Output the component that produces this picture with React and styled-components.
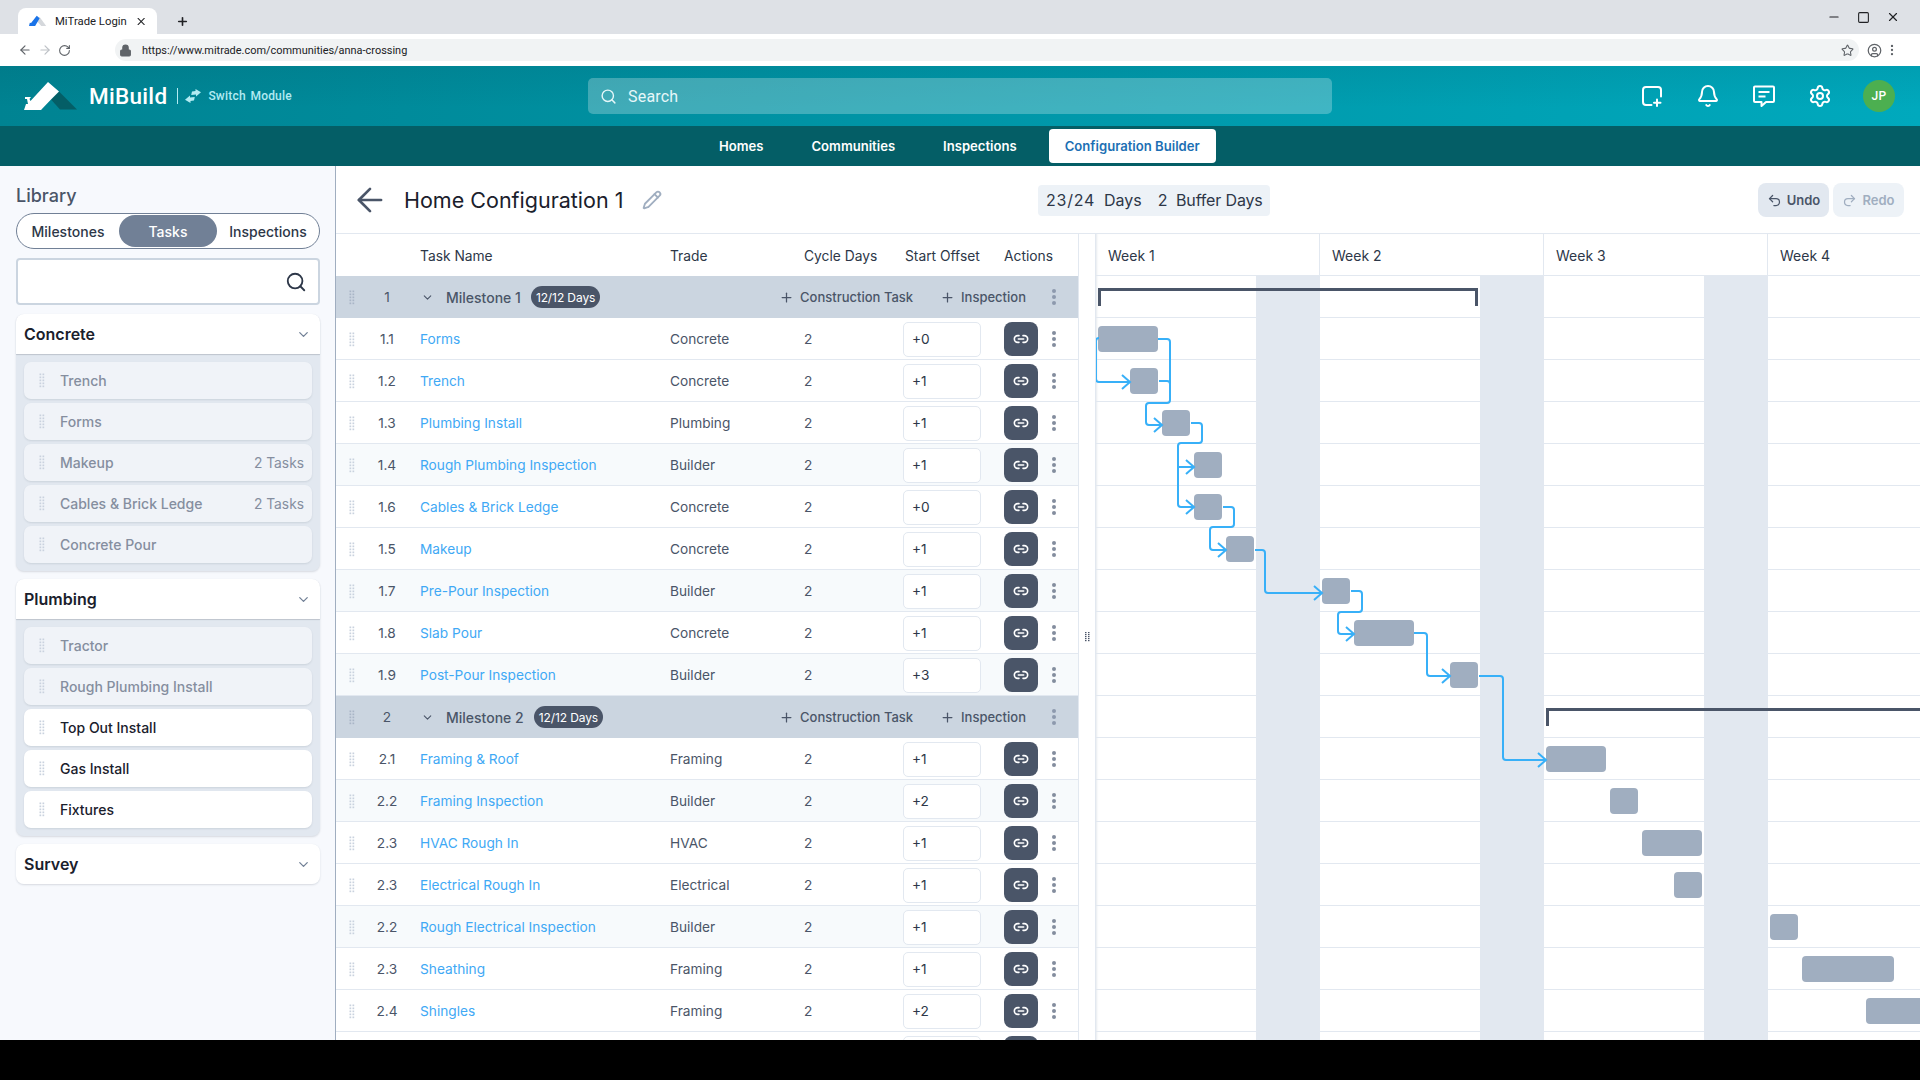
import React from 'react';
import styled, { createGlobalStyle } from 'styled-components';
import {
  ArrowLeft, ArrowRight, RotateCw, Lock, Star, CircleUser, EllipsisVertical, Minus, Square, X, Plus,
  Search, Bell, Settings, Pencil, ChevronDown, Link2, Undo2, Redo2,
} from 'lucide-react';

const GlobalStyle = createGlobalStyle`
  html, body { margin: 0; padding: 0; background: #000; }
  body { font-family: Inter, "Liberation Sans", sans-serif; overflow: hidden; }
  * { box-sizing: border-box; }
`;

const Page = styled.div`
  width: 1920px; height: 1080px; display: flex; flex-direction: column; overflow: hidden; background: #fff;
`;

/* browser chrome */
const TabStrip = styled.div`
  height: 34px; background: #dee1e6; display: flex; align-items: flex-end; padding-left: 18px; flex: none;
  font-family: Roboto, sans-serif; color: #202124;
`;
const Tab = styled.div`
  width: 139px; height: 26px; background: #fff; border-radius: 8px 8px 0 0; display: flex; align-items: center;
  padding: 0 10px 0 11px; font-size: 11.300px; gap: 8px;
`;
const TabTitle = styled.span`flex: 1; white-space: nowrap;`;
const NewTab = styled.div`width: 50px; height: 26px; display: flex; align-items: center; justify-content: center;`;
const WindowControls = styled.div`
  margin-left: auto; height: 34px; display: flex; align-items: center; gap: 16px; padding: 0 20px 0 0;
`;
const Toolbar = styled.div`
  height: 32px; background: #fff; display: flex; align-items: center; flex: none; padding: 0 20px 0 18px;
  font-family: Roboto, sans-serif;
`;
const NavIcons = styled.div`display: flex; align-items: center; gap: 6px; width: 97px; color: #5f6368;`;
const Address = styled.div`
  width: 1744px; height: 22px; border-radius: 11px; background: #f1f3f4; display: flex; align-items: center;
  padding: 0 5px 0 4px; font-size: 10.950px; color: #202124; gap: 10px;
`;
const AddressUrl = styled.span`flex: 1; white-space: nowrap;`;
const ProfileIcons = styled.div`display: flex; align-items: center; gap: 3px; margin-left: 8px; color: #5f6368;`;

/* app header */
const Header = styled.header`
  height: 60px; flex: none; display: grid; grid-template-columns: 588px 744px 1fr; align-items: center; color: #fff;
  background: linear-gradient(180deg, rgba(0,40,50,.08), rgba(0,40,50,0) 70%), linear-gradient(90deg, #008392, #00a9bd);
  font-family: Roboto, sans-serif;
`;
const Brand = styled.div`display: flex; align-items: center; padding-left: 24px;`;
const BrandName = styled.span`font-size: 22.500px; font-weight: 500; margin-left: 9px; letter-spacing: .3px;`;
const BrandRule = styled.span`width: 1px; height: 16px; background: #b2ebf2; margin: 0 7px 0 10px;`;
const SwitchLabel = styled.span`
  font-size: 12px; font-weight: 500; color: #b2ebf2; margin-left: 7px; word-spacing: 1.500px; letter-spacing: .2px;
`;
const HeaderSearch = styled.div`
  height: 36px; border-radius: 5px; background: rgba(255,255,255,.25); display: flex; align-items: center;
  padding-left: 12px; gap: 11px; font-size: 16px; color: #e6f7f9; letter-spacing: .2px;
`;
const HeaderActions = styled.div`
  display: flex; align-items: center; justify-content: flex-end; gap: 32px; padding-right: 25px;
`;
const Avatar = styled.div`
  width: 32px; height: 32px; border-radius: 50%; background: #4caf50; display: flex; align-items: center;
  justify-content: center; font-size: 12px; font-weight: 500; letter-spacing: .3px; margin-left: -1px;
`;
const NavBar = styled.nav`
  height: 40px; flex: none; background: #045e66; display: flex; align-items: center; gap: 16px; padding-left: 703px;
`;
const NavLink = styled.a`
  height: 34px; display: flex; align-items: center; padding: 0 16px; border-radius: 4px;
  font-size: 13.100px; font-weight: 600;
  color: ${p => (p.$active ? '#1c6fb4' : '#fff')}; background: ${p => (p.$active ? '#fff' : 'transparent')};
`;

/* body */
const Body = styled.div`flex: 1; min-height: 0; display: flex;`;
const Sidebar = styled.aside`
  width: 336px; flex: none; background: #f7f9fd; border-right: 1px solid #a0aec0; padding: 19px 15px 0 16px; overflow: hidden;
`;
const SideTitle = styled.h2`margin: 0; font-size: 18px; line-height: 22px; font-weight: 500; color: #4a5568;`;
const LibTabs = styled.div`
  margin-top: 6px; height: 36px; border: 1px solid #718096; border-radius: 18px; background: #fff; padding: 1px 0;
  display: grid; grid-template-columns: 102px 98px 102px;
`;
const LibTab = styled.div`
  border-radius: 17px; display: flex; align-items: center; justify-content: center; font-size: 14px; font-weight: 500;
  color: ${p => (p.$active ? '#fff' : '#2d3748')}; background: ${p => (p.$active ? '#718096' : 'transparent')};
`;
const SideSearch = styled.div`
  margin-top: 9px; height: 47px; border: 2px solid #cbd5e0; border-radius: 4px; background: #fff;
  display: flex; align-items: center; justify-content: flex-end; padding-right: 11px; color: #2d3748;
`;
const Group = styled.section`
  margin-top: ${p => (p.$first ? 9 : 8)}px; border-radius: 8px; box-shadow: 0 1px 2px rgba(45,55,72,.16); background: #e2e8f0;
`;
const GroupHead = styled.div`
  height: 40px; background: #fff; display: flex; align-items: center; justify-content: space-between; padding: 0 9px 0 8px;
  border-radius: ${p => (p.$closed ? '8px' : '8px 8px 0 0')}; font-size: 16px; font-weight: 600; color: #1a202c;
  box-shadow: ${p => (p.$closed ? 'none' : '0 1px 1px rgba(45,55,72,.2)')};
`;
const GroupBody = styled.div`display: flex; flex-direction: column; gap: 4px; padding: 8px;`;
const Item = styled.div`
  height: 37px; border-radius: 7px; display: flex; align-items: center; padding: 0 8px 0 15px; font-size: 14px; font-weight: 500;
  box-shadow: 0 1px 2px rgba(45,55,72,.12);
  background: ${p => (p.$used ? '#f0f3f8' : '#fff')}; color: ${p => (p.$used ? '#858e9f' : '#1a202c')};
`;
const ItemName = styled.span`margin-left: 15px; flex: 1;`;
const ItemCount = styled.span`font-weight: 400; color: #858e9f; font-size: 13.800px;`;

const Workspace = styled.main`flex: 1; min-width: 0; display: flex; flex-direction: column;`;
const TitleBar = styled.div`
  height: 68px; flex: none; border-bottom: 1px solid #e2e8f0; display: grid; grid-template-columns: 702px auto 1fr;
  align-items: center; padding: 1px 16px 0 0;
`;
const TitleGroup = styled.div`display: flex; align-items: center; padding-left: 15px; color: #4a5568;`;
const Title = styled.h1`margin: 0 19px 0 15px; font-size: 21.500px; line-height: 28px; font-weight: 400; color: #1a202c;`;
const DaysChip = styled.div`
  height: 31px; padding: 0 7px 0 8px; border-radius: 4px; background: #edf2f7; display: flex; align-items: center; gap: 16px;
  font-size: 16px; color: #2d3748;
`;
const DaysCount = styled.span`letter-spacing: .75px;`;
const BufferCount = styled.span`letter-spacing: -.15px;`;
const HistoryGroup = styled.div`display: flex; justify-content: flex-end; gap: 4px;`;
const HistoryButton = styled.button`
  width: 71px; height: 34px; border: 0; border-radius: 8px; display: flex; align-items: center; justify-content: center; gap: 5px;
  font: 600 13px Inter, sans-serif; background: ${p => (p.$off ? '#edf2f7' : '#e2e8f0')}; color: ${p => (p.$off ? '#a0aec0' : '#4a5568')};
`;
const Split = styled.div`flex: 1; min-height: 0; display: flex; align-items: stretch;`;
const Table = styled.div`width: 743px; flex: none; border-right: 1px solid #e2e8f0; overflow: hidden;`;
const Row = styled.div`
  height: 42px; padding-top: 1px; display: grid; grid-template-columns: 32px 52px 250px 134px 99px 101px 1fr; align-items: center;
  border-bottom: 1px solid #e2e8f0; font-size: 13.700px; color: #4a5568; background: ${p => (p.$tint ? '#f7fafc' : '#fff')};
`;
const HeadRow = styled(Row)`color: #2d3748; font-weight: 400; border-bottom: 0; font-size: 13.800px;`;
const OffsetHead = styled.span`margin-left: 2px;`;
const MilestoneRow = styled(Row)`background: #cbd5e0; border-bottom: 0; padding-top: 0;`;
const GripCell = styled.div`display: flex; justify-content: center;`;
const IndexCell = styled.div`width: 38px; text-align: center;`;
const TaskLink = styled.a`color: #3fa9f5;`;
const OffsetField = styled.div`
  width: 78px; height: 35px; border: 1px solid #e2e8f0; border-radius: 5px; background: #fff; display: flex; align-items: center;
  padding-left: 8px; color: #2d3748;
`;
const ActionCell = styled.div`display: flex; align-items: center; gap: 0;`;
const LinkButton = styled.div`
  width: 34px; height: 34px; border-radius: 8px; background: #4a5568; color: #fff; display: flex; align-items: center; justify-content: center;
`;
const MoreCell = styled.div`width: 32px; display: flex; justify-content: center;`;
const MilestoneBody = styled.div`
  grid-column: 3 / -1; display: flex; align-items: center; font-weight: 500; color: #4a5568; padding-right: 8px; white-space: nowrap;
`;
const MilestoneChevron = styled(ChevronDown)`margin-left: 1px;`;
const MilestoneName = styled.span`margin-left: 12px; font-size: 14px;`;
const DaysPill = styled.span`
  margin-left: 10px; height: 22px; border-radius: 11px; padding: 0 5px; background: #4a5568; color: #fff; font-size: 12px; font-weight: 400;
  display: flex; align-items: center; letter-spacing: -.1px;
`;
const AddGroup = styled.div`margin-left: auto; display: flex; align-items: center; gap: 27px;`;
const AddAction = styled.span`display: flex; align-items: center; gap: 6px; font-size: 13px;`;
const MilestoneMore = styled.div`margin-left: 12px; width: 32px; display: flex; justify-content: center;`;
const Handle = styled.div`width: 16px; flex: none; display: flex; align-items: center; justify-content: center;`;

const Gantt = styled.div`
  flex: 1; min-width: 0; border-left: 1px solid #e2e8f0; overflow: hidden;
  box-shadow: inset 2px 0 2px -1px rgba(160,174,192,.25);
`;
const WeekHead = styled.div`display: flex; height: 42px; border-bottom: 1px solid #e2e8f0;`;
const Week = styled.div`
  width: 224px; flex: none; border-right: 1px solid #e2e8f0; padding: 1px 0 0 12px; display: flex; align-items: center; font-size: 14px; color: #2d3748;
`;
const Canvas = styled.div`position: relative; height: 800px;`;
const Weekend = styled.div`
  position: absolute; top: 0; bottom: 0; left: ${p => p.$left}px; width: 64px; background: #e2e8f0; z-index: 1;
`;
const GanttRow = styled.div`
  display: flow-root; height: 42px; border-bottom: 1px solid #e2e8f0; position: relative; z-index: ${p => (p.$over ? 2 : 0)};
`;
const Bar = styled.div`
  height: 26px; margin-top: 8px; border-radius: 4px; background: #a0aec0;
  margin-left: ${p => p.$left}px; width: ${p => p.$width}px;
`;
const Bracket = styled.div`
  height: 18px; margin-top: 12px; border: 3px solid #4a5568; border-bottom: 0;
  margin-left: ${p => p.$left}px; width: ${p => p.$width}px;
`;
const Connectors = styled.svg`
  position: absolute; left: 0; top: 0; width: 824px; height: 800px; z-index: 3; pointer-events: none;
`;

const Blackout = styled.div`height: 40px; flex: none; background: #000;`;

const Grip = ({ rows = 5, color = '#c9d2de' }) => (
  <svg width="6" height={rows * 3} viewBox={`0 0 6 ${rows * 3}`} fill={color}>
    {Array.from({ length: rows }).flatMap((_, i) => [
      <rect key={`a${i}`} x="0.5" y={i * 3 + .5} width="1.700" height="1.700" />,
      <rect key={`b${i}`} x="3.500" y={i * 3 + .5} width="1.700" height="1.700" />,
    ])}
  </svg>
);
const Dots = ({ color = '#838d9e' }) => (
  <svg width="6" height="18" viewBox="0 0 6 18" fill={color}>
    <circle cx="3" cy="3" r="2" /><circle cx="3" cy="9" r="2" /><circle cx="3" cy="15" r="2" />
  </svg>
);
const Favicon = () => (
  <svg width="22" height="14" viewBox="0 0 22 14">
    <path d="M9 6.500l4-4.500 8 11h-6z" fill="#d5d8dc" />
    <path d="M0 13l1-4 1.500.5L9.500.5l3.500 3-5.500 9.500H0z" fill="#1a73e8" />
  </svg>
);
const Logo = () => (
  <svg width="56" height="29" viewBox="0 0 56 29">
    <path d="M27 17.500L35 9.500l18 18H36z" fill="#045e66" />
    <path d="M0 28L2 22H4L3 17H1V15H7L5.500 17 6.500 19 24 0 35 9.500 27 17.500 17 28z" fill="#fff" />
  </svg>
);
const SwitchIcon = () => (
  <svg width="16" height="14" viewBox="0 0 16 14" fill="#b2ebf2">
    <path d="M7 2.500l3.500-.5V0L16 3.200 11 7.600V5.400L6.200 6z" />
    <path d="M9 11.500l-3.500.5v2L0 10.800 5 6.400v2.200L9.800 8z" />
  </svg>
);
const AddSquare = () => (
  <svg width="24" height="24" viewBox="0 0 24 24" fill="none" stroke="#fff" strokeWidth="2" strokeLinecap="round">
    <path d="M11.500 21H6a3 3 0 0 1-3-3V6a3 3 0 0 1 3-3h12a3 3 0 0 1 3 3v6.500" />
    <path d="M17 15.500v6.500M14 18.700h6.500" />
  </svg>
);
const ChatIcon = () => (
  <svg width="24" height="24" viewBox="0 0 24 24" fill="none" stroke="#fff" strokeWidth="2" strokeLinejoin="round">
    <path d="M2 3.500a1 1 0 0 1 1-1h18a1 1 0 0 1 1 1v13.500a1 1 0 0 1-1 1h-7l-4.500 4v-4H3a1 1 0 0 1-1-1z" />
    <path d="M6.500 8h11M6.500 12.500h7" />
  </svg>
);

const route = (pts, r = 3) => {
  let d = `M${pts[0][0]} ${pts[0][1]}`;
  for (let i = 1; i < pts.length - 1; i++) {
    const [x, y] = pts[i], [px, py] = pts[i - 1], [nx, ny] = pts[i + 1];
    const inx = Math.sign(x - px), iny = Math.sign(y - py), ox = Math.sign(nx - x), oy = Math.sign(ny - y);
    d += `L${x - inx * r} ${y - iny * r}Q${x} ${y} ${x + ox * r} ${y + oy * r}`;
  }
  const [ex, ey] = pts[pts.length - 1];
  return `${d}L${ex} ${ey}`;
};
const head = (x, y) => `M${x - 8} ${y - 7}L${x} ${y}L${x - 8} ${y + 7}`;
const links = [
  route([[1098, 338], [1096, 338], [1096, 382], [1130, 382]]), head(1130, 382),
  route([[1158, 339], [1170, 339], [1170, 403], [1146, 403], [1146, 425], [1162, 425]]), head(1162, 425),
  route([[1159, 381], [1170, 381], [1170, 395]]),
  route([[1191, 423], [1202, 423], [1202, 443], [1178, 443], [1178, 507], [1194, 507]]), head(1194, 507),
  `M1178 467H1194`, head(1194, 467),
  route([[1223, 507], [1234, 507], [1234, 527], [1210, 527], [1210, 550], [1226, 550]]), head(1226, 550),
  route([[1255, 550], [1265, 550], [1265, 593], [1322, 593]]), head(1322, 593),
  route([[1351, 591], [1362, 591], [1362, 612], [1338, 612], [1338, 634], [1354, 634]]), head(1354, 634),
  route([[1414, 633], [1427, 633], [1427, 676], [1450, 676]]), head(1450, 676),
  route([[1479, 676], [1503, 676], [1503, 760], [1546, 760]]), head(1546, 760),
];

const rows = [
  { type: 'm', idx: '1', name: 'Milestone 1', bracket: [2, 380] },
  { idx: '1.1', name: 'Forms', trade: 'Concrete', off: '+0', bar: [2, 60] },
  { idx: '1.2', name: 'Trench', trade: 'Concrete', off: '+1', bar: [34, 28] },
  { idx: '1.3', name: 'Plumbing Install', trade: 'Plumbing', off: '+1', bar: [66, 28] },
  { idx: '1.4', name: 'Rough Plumbing Inspection', trade: 'Builder', off: '+1', bar: [98, 28] },
  { idx: '1.6', name: 'Cables & Brick Ledge', trade: 'Concrete', off: '+0', bar: [98, 28] },
  { idx: '1.5', name: 'Makeup', trade: 'Concrete', off: '+1', bar: [130, 28] },
  { idx: '1.7', name: 'Pre-Pour Inspection', trade: 'Builder', off: '+1', bar: [226, 28] },
  { idx: '1.8', name: 'Slab Pour', trade: 'Concrete', off: '+1', bar: [258, 60] },
  { idx: '1.9', name: 'Post-Pour Inspection', trade: 'Builder', off: '+3', bar: [354, 28] },
  { type: 'm', idx: '2', name: 'Milestone 2', bracket: [450, 900] },
  { idx: '2.1', name: 'Framing & Roof', trade: 'Framing', off: '+1', bar: [450, 60] },
  { idx: '2.2', name: 'Framing Inspection', trade: 'Builder', off: '+2', bar: [514, 28] },
  { idx: '2.3', name: 'HVAC Rough In', trade: 'HVAC', off: '+1', bar: [546, 60] },
  { idx: '2.3', name: 'Electrical Rough In', trade: 'Electrical', off: '+1', bar: [578, 28] },
  { idx: '2.2', name: 'Rough Electrical Inspection', trade: 'Builder', off: '+1', bar: [674, 28] },
  { idx: '2.3', name: 'Sheathing', trade: 'Framing', off: '+1', bar: [706, 92] },
  { idx: '2.4', name: 'Shingles', trade: 'Framing', off: '+2', bar: [770, 92] },
];

const library = [
  { title: 'Concrete', items: [['Trench', 1], ['Forms', 1], ['Makeup', 1, '2 Tasks'], ['Cables & Brick Ledge', 1, '2 Tasks'], ['Concrete Pour', 1]] },
  { title: 'Plumbing', items: [['Tractor', 1], ['Rough Plumbing Install', 1], ['Top Out Install'], ['Gas Install'], ['Fixtures']] },
  { title: 'Survey' },
];

export default function App() {
  return (
    <Page>
      <GlobalStyle />
      <TabStrip>
        <Tab>
          <Favicon />
          <TabTitle>MiTrade Login</TabTitle>
          <X size={15} strokeWidth={2} />
        </Tab>
        <NewTab><Plus size={13} strokeWidth={3} /></NewTab>
        <WindowControls>
          <Minus size={14} strokeWidth={2} />
          <Square size={13} strokeWidth={2} />
          <X size={14} strokeWidth={2} />
        </WindowControls>
      </TabStrip>
      <Toolbar>
        <NavIcons>
          <ArrowLeft size={14} />
          <ArrowRight size={14} color="#bdc1c6" />
          <RotateCw size={13} />
        </NavIcons>
        <Address>
          <Lock size={13} fill="#5f6368" color="#5f6368" />
          <AddressUrl>https://www.mitrade.com/communities/anna-crossing</AddressUrl>
          <Star size={13} color="#5f6368" />
        </Address>
        <ProfileIcons>
          <CircleUser size={15} />
          <EllipsisVertical size={14} />
        </ProfileIcons>
      </Toolbar>

      <Header>
        <Brand>
          <Logo />
          <BrandName>MiBuild</BrandName>
          <BrandRule />
          <SwitchIcon />
          <SwitchLabel>Switch Module</SwitchLabel>
        </Brand>
        <HeaderSearch>
          <Search size={17} />
          Search
        </HeaderSearch>
        <HeaderActions>
          <AddSquare />
          <Bell size={24} strokeWidth={2} />
          <ChatIcon />
          <Settings size={24} strokeWidth={2} />
          <Avatar>JP</Avatar>
        </HeaderActions>
      </Header>
      <NavBar>
        <NavLink>Homes</NavLink>
        <NavLink>Communities</NavLink>
        <NavLink>Inspections</NavLink>
        <NavLink $active>Configuration Builder</NavLink>
      </NavBar>

      <Body>
        <Sidebar>
          <SideTitle>Library</SideTitle>
          <LibTabs>
            <LibTab>Milestones</LibTab>
            <LibTab $active>Tasks</LibTab>
            <LibTab>Inspections</LibTab>
          </LibTabs>
          <SideSearch><Search size={22} strokeWidth={2} /></SideSearch>
          {library.map((g, i) => (
            <Group key={g.title} $first={i === 0}>
              <GroupHead $closed={!g.items}>
                {g.title}
                <ChevronDown size={15} color="#718096" />
              </GroupHead>
              {g.items && (
                <GroupBody>
                  {g.items.map(([name, used, count]) => (
                    <Item key={name} $used={!!used}>
                      <Grip />
                      <ItemName>{name}</ItemName>
                      {count && <ItemCount>{count}</ItemCount>}
                    </Item>
                  ))}
                </GroupBody>
              )}
            </Group>
          ))}
        </Sidebar>

        <Workspace>
          <TitleBar>
            <TitleGroup>
              <ArrowLeft size={38} strokeWidth={1.700} />
              <Title>Home Configuration 1</Title>
              <Pencil size={20} color="#a0aec0" strokeWidth={2.200} />
            </TitleGroup>
            <DaysChip>
              <span><DaysCount>23/24</DaysCount>&nbsp; Days</span>
              <BufferCount>2&nbsp; Buffer Days</BufferCount>
            </DaysChip>
            <HistoryGroup>
              <HistoryButton><Undo2 size={15} />Undo</HistoryButton>
              <HistoryButton $off><Redo2 size={15} />Redo</HistoryButton>
            </HistoryGroup>
          </TitleBar>
          <Split>
            <Table>
              <HeadRow>
                <span /><span />
                <span>Task Name</span>
                <span>Trade</span>
                <span>Cycle Days</span>
                <OffsetHead>Start Offset</OffsetHead>
                <span>Actions</span>
              </HeadRow>
              {rows.map((r, i) => (r.type === 'm' ? (
                <MilestoneRow key={i}>
                  <GripCell><Grip color="#a9b5c6" /></GripCell>
                  <IndexCell>{r.idx}</IndexCell>
                  <MilestoneBody>
                    <MilestoneChevron size={13} />
                    <MilestoneName>{r.name}</MilestoneName>
                    <DaysPill>12/12 Days</DaysPill>
                    <AddGroup>
                      <AddAction><Plus size={15} />Construction Task</AddAction>
                      <AddAction><Plus size={15} />Inspection</AddAction>
                    </AddGroup>
                    <MilestoneMore><Dots color="#8d99ad" /></MilestoneMore>
                  </MilestoneBody>
                </MilestoneRow>
              ) : (
                <Row key={i} $tint={r.trade === 'Builder'}>
                  <GripCell><Grip /></GripCell>
                  <IndexCell>{r.idx}</IndexCell>
                  <TaskLink>{r.name}</TaskLink>
                  <span>{r.trade}</span>
                  <span>2</span>
                  <OffsetField>{r.off}</OffsetField>
                  <ActionCell>
                    <LinkButton><Link2 size={16} strokeWidth={2.400} /></LinkButton>
                    <MoreCell><Dots /></MoreCell>
                  </ActionCell>
                </Row>
              )))}
              <Row>
                <span /><span /><span /><span /><span />
                <OffsetField />
                <ActionCell><LinkButton /></ActionCell>
              </Row>
            </Table>
            <Handle>
              <svg width="5" height="10" viewBox="0 0 5 10" fill="#4a5568">
                {[0, 2, 4, 6, 8].flatMap(y => [
                  <rect key={`l${y}`} x="0" y={y} width="1.500" height="1.200" />,
                  <rect key={`r${y}`} x="3" y={y} width="1.500" height="1.200" />,
                ])}
              </svg>
            </Handle>
            <Gantt>
              <WeekHead>
                {['Week 1', 'Week 2', 'Week 3', 'Week 4'].map(w => <Week key={w}>{w}</Week>)}
              </WeekHead>
              <Canvas>
                {[160, 384, 608].map(l => <Weekend key={l} $left={l} />)}
                {rows.map((r, i) => (
                  <GanttRow key={i} $over={!!r.bracket}>
                    {r.bracket && <Bracket $left={r.bracket[0]} $width={r.bracket[1]} />}
                    {r.bar && <Bar $left={r.bar[0]} $width={r.bar[1]} />}
                  </GanttRow>
                ))}
                <GanttRow />
                <Connectors viewBox="1096 276 824 800" fill="none" stroke="#38b0f8" strokeWidth="2">
                  {links.map((d, i) => <path key={i} d={d} />)}
                </Connectors>
              </Canvas>
            </Gantt>
          </Split>
        </Workspace>
      </Body>
      <Blackout />
    </Page>
  );
}
